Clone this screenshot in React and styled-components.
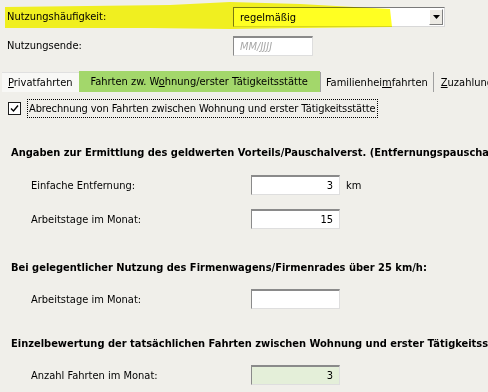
import React from 'react'
import styled, { createGlobalStyle } from 'styled-components'

const Global = createGlobalStyle`
  html, body { margin:0; padding:0; }
  body {
    background:#f0efea;
    font-family:"DejaVu Sans Condensed","DejaVu Sans",Tahoma,sans-serif;
    font-size:11px;
    color:#000;
    width:488px;
    height:392px;
    overflow:hidden;
  }
`

const Page = styled.div`
  position:relative;
  width:488px;
  height:392px;
  overflow:hidden;
`

const Marker = styled.svg`
  position:absolute;
  left:0;
  top:0;
  width:488px;
  height:40px;
  mix-blend-mode:multiply;
  pointer-events:none;
`

const TopForm = styled.div`
  display:grid;
  grid-template-columns:226px auto;
  row-gap:9px;
  padding:7px 0 0 7px;
  align-items:center;
`

const Label = styled.div`
  line-height:20px;
  white-space:nowrap;
`

const Combo = styled.div`
  width:212px;
  height:20px;
  box-sizing:border-box;
  background:#fff;
  border:1px solid #7a7a7a;
  border-right-color:#d8d8d8;
  border-bottom-color:#d8d8d8;
  display:flex;
  align-items:center;
  justify-content:space-between;
  padding-left:6px;
`

const DropBtn = styled.div`
  width:14px;
  height:16px;
  margin-right:1px;
  box-sizing:border-box;
  background:#eceae4;
  border:1px solid #fff;
  border-right-color:#808080;
  border-bottom-color:#808080;
  display:flex;
  align-items:center;
  justify-content:center;
`

const Field = styled.div`
  width:${p => p.w || 89}px;
  height:20px;
  box-sizing:border-box;
  background:${p => (p.filled ? '#e4efd9' : '#fff')};
  border:1px solid #8a8a8a;
  border-right-color:#dedede;
  border-bottom-color:#dedede;
  border-top:2px solid #8a8a8a;
  display:flex;
  align-items:center;
  justify-content:${p => (p.left ? 'flex-start' : 'flex-end')};
  padding:0 6px;
  color:${p => (p.ph ? '#a8a8a8' : '#000')};
  font-style:${p => (p.ph ? 'italic' : 'normal')};
`

const Tabs = styled.div`
  display:flex;
  align-items:flex-end;
  height:22px;
  margin-top:14px;
  padding-left:2px;
`

const Tab = styled.div`
  height:${p => (p.active ? 21 : 20)}px;
  box-sizing:border-box;
  display:flex;
  align-items:center;
  padding:0 ${p => p.pad || 6}px;
  white-space:nowrap;
  background:${p => (p.active ? '#a3d76b' : p.first ? '#f8f8f6' : '#f0efea')};
  border-left:${p => (p.sep ? '1px solid #a0a0a0' : '0')};
  border-top:${p => (p.first ? '1px solid #e0e0e0' : '0')};
  u { text-decoration:underline; }
`

const CheckRow = styled.div`
  display:flex;
  align-items:center;
  gap:6px;
  margin:7px 0 0 8px;
`

const Box = styled.div`
  width:13px;
  height:13px;
  box-sizing:border-box;
  border:1px solid #1c1c1c;
  background:#fff;
  display:flex;
  align-items:center;
  justify-content:center;
`

const Focus = styled.div`
  border:1px dotted #000;
  padding:2px 1px;
  line-height:13px;
  white-space:nowrap;
  letter-spacing:-0.1px;
`

const Heading = styled.div`
  font-weight:bold;
  white-space:nowrap;
  margin:${p => p.mt}px 0 0 11px;
  line-height:13px;
`

const Row = styled.div`
  display:flex;
  align-items:center;
  margin:${p => p.mt}px 0 0 31px;
  height:20px;
`

const RowLabel = styled.div`
  width:220px;
  white-space:nowrap;
`

const Unit = styled.span`
  margin-left:6px;
`

const App = () => (
  <Page>
    <Global />
    <TopForm>
      <Label>Nutzungshäufigkeit:</Label>
      <Combo>
        <span>regelmäßig</span>
        <DropBtn>
          <svg width="7" height="4" viewBox="0 0 7 4">
            <path d="M0 0H7L3.5 4Z" fill="#000" />
          </svg>
        </DropBtn>
      </Combo>
      <Label>Nutzungsende:</Label>
      <Field w={80} left ph>MM/JJJJ</Field>
    </TopForm>

    <Tabs>
      <Tab first pad={6}><span><u>P</u>rivatfahrten</span></Tab>
      <Tab active pad={12}><span>Fahrten zw. W<u>o</u>hnung/erster Tätigkeitsstätte</span></Tab>
      <Tab sep pad={5}><span>Familienhei<u>m</u>fahrten</span></Tab>
      <Tab sep pad={7}><span><u>Z</u>uzahlungen</span></Tab>
    </Tabs>

    <CheckRow>
      <Box>
        <svg width="11" height="11" viewBox="0 0 11 11">
          <path d="M2 5.5L4.5 8L9 2.5" stroke="#000" strokeWidth="1.4" fill="none" />
        </svg>
      </Box>
      <Focus>Abrechnung von Fahrten zwischen Wohnung und erster Tätigkeitsstätte</Focus>
    </CheckRow>

    <Heading mt={28}>Angaben zur Ermittlung des geldwerten Vorteils/Pauschalverst. (Entfernungspauschale)</Heading>
    <Row mt={16}>
      <RowLabel>Einfache Entfernung:</RowLabel>
      <Field>3</Field>
      <Unit>km</Unit>
    </Row>
    <Row mt={14}>
      <RowLabel>Arbeitstage im Monat:</RowLabel>
      <Field>15</Field>
    </Row>

    <Heading mt={32}>Bei gelegentlicher Nutzung des Firmenwagens/Firmenrades über 25 km/h:</Heading>
    <Row mt={15}>
      <RowLabel>Arbeitstage im Monat:</RowLabel>
      <Field />
    </Row>

    <Heading mt={28}>Einzelbewertung der tatsächlichen Fahrten zwischen Wohnung und erster Tätigkeitsstätte</Heading>
    <Row mt={15}>
      <RowLabel>Anzahl Fahrten im Monat:</RowLabel>
      <Field filled>3</Field>
    </Row>

    <Marker viewBox="0 0 488 40">
      <path
        d="M5 7 L170 5 L230 2 L300 4 L390 9 L392 27 L300 28 L230 29 L150 28 L5 28 Z"
        fill="#ffff22"
      />
    </Marker>
  </Page>
)

export default App
